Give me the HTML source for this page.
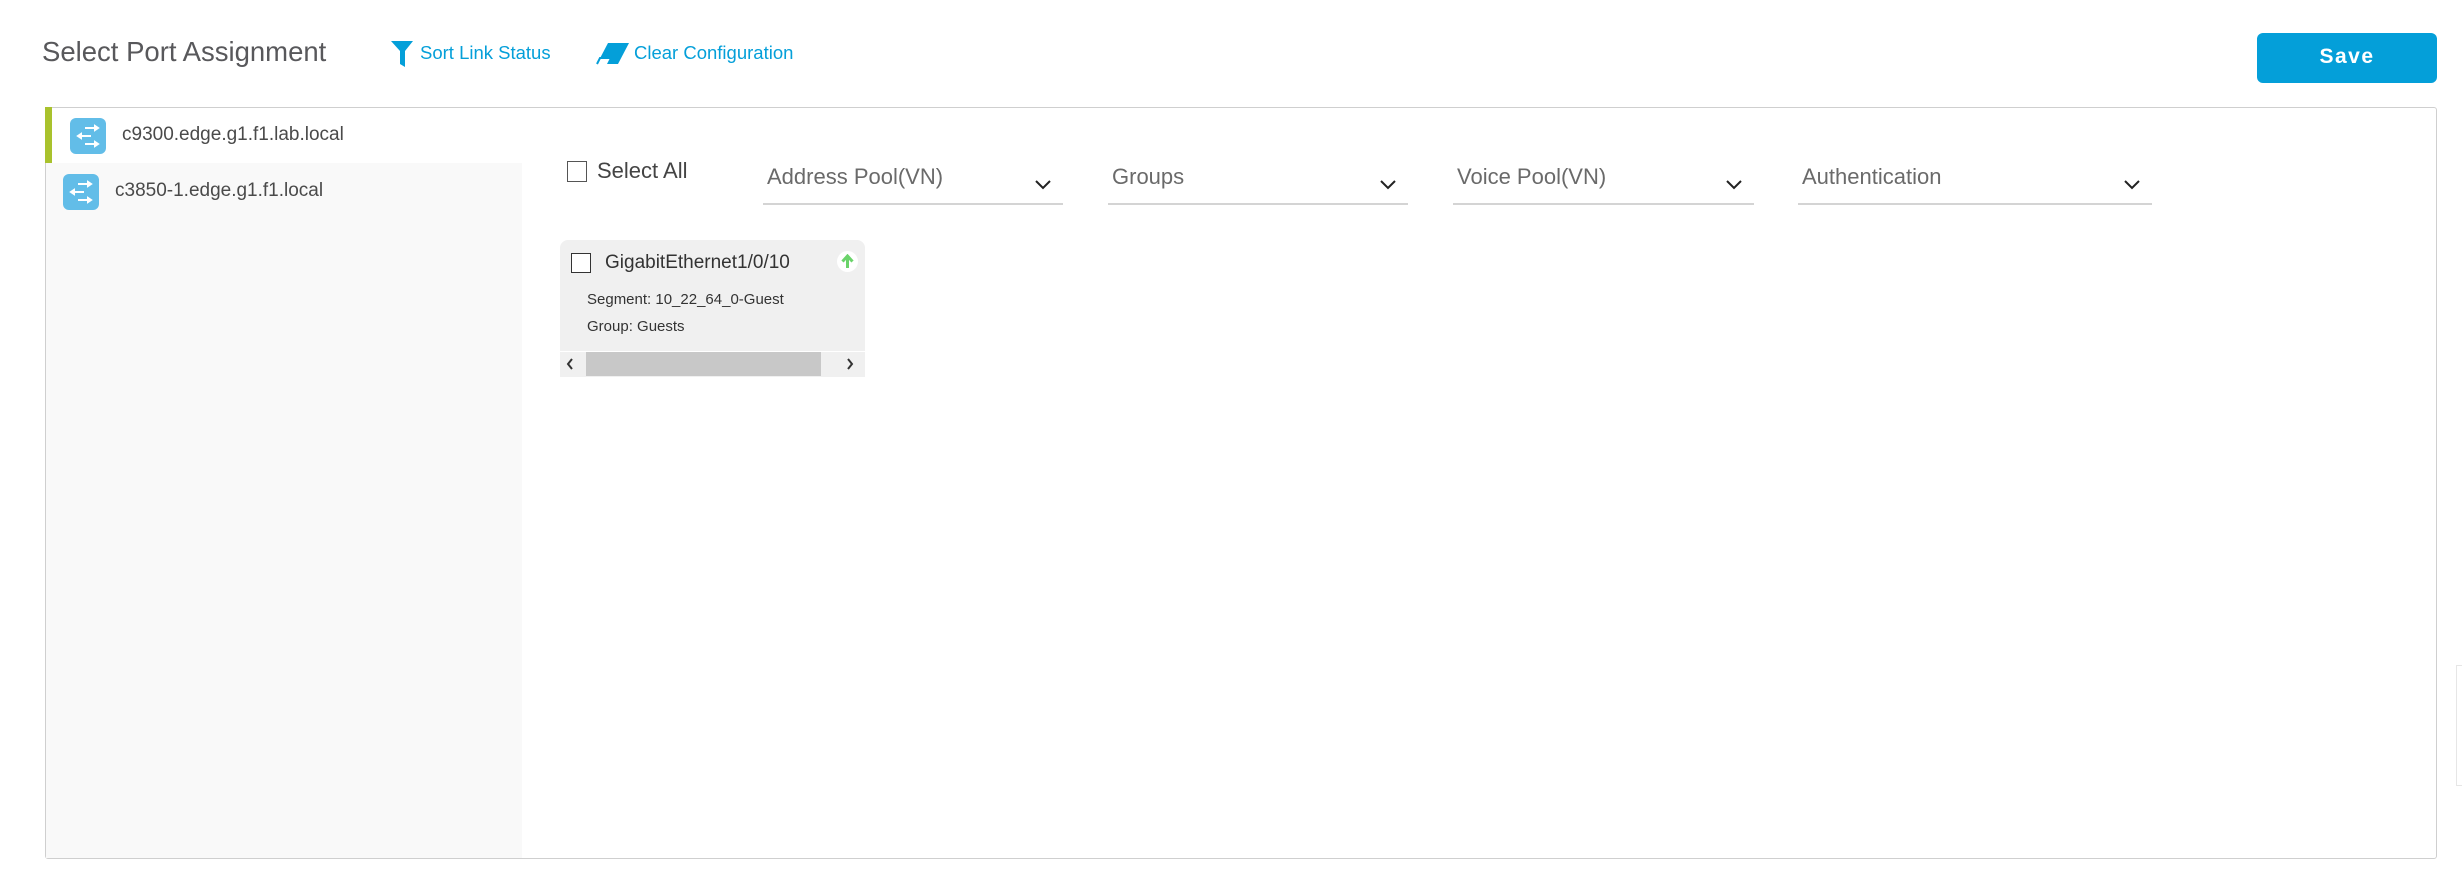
<!DOCTYPE html>
<html><head><meta charset="utf-8"><style>
*{margin:0;padding:0;box-sizing:border-box}
body{width:2462px;height:879px;background:#fff;font-family:"Liberation Sans",Arial,sans-serif;color:#58585b;position:relative;overflow:hidden}
.a{position:absolute;white-space:nowrap}
.link{color:#049fd9;font-size:18.5px}
.dd{position:absolute;top:160px;height:45px;border-bottom:2px solid #d4d4d4}
.dd span{position:absolute;left:4px;top:4px;font-size:22px;color:#6a6a6a}
.dd svg{position:absolute;right:12px;top:20px}
.ic{position:absolute;width:36px;height:36px;border-radius:6px;background:#62bde8}
</style></head><body>
<div class="a" style="left:42px;top:36px;font-size:27.5px;color:#58585b">Select Port Assignment</div>
<svg class="a" style="left:390px;top:40px" width="24" height="28" viewBox="0 0 24 28"><path d="M1 1H23L15 11V27L10 24V11Z" fill="#049fd9"/></svg>
<div class="a link" style="left:420px;top:42px">Sort Link Status</div>
<svg class="a" style="left:596px;top:42px" width="34" height="24" viewBox="0 0 34 24"><path d="M12 1H33L22 22H1Z" fill="#049fd9"/><path d="M4 16H14L11 22H1Z" fill="#fff"/><path d="M1 22L4 16H14" stroke="#049fd9" stroke-width="2" fill="none"/></svg>
<div class="a link" style="left:634px;top:42px">Clear Configuration</div>
<div class="a" style="left:2257px;top:33px;width:180px;height:50px;border-radius:6px;background:#049fd9;color:#fff;font-size:21px;font-weight:bold;text-align:center;line-height:48px;letter-spacing:1.5px">Save</div>

<div class="a" style="left:45px;top:107px;width:2392px;height:752px;border:1.5px solid #cfcfcf;border-radius:3px"></div>
<div class="a" style="left:46px;top:163px;width:476px;height:695px;background:#f9f9f9"></div>
<div class="a" style="left:45px;top:107px;width:7px;height:56px;background:#a9c22d"></div>

<div class="ic" style="left:70px;top:118px"></div>
<svg class="a" style="left:70px;top:118px" width="36" height="36" viewBox="0 0 36 36" stroke="#fff" stroke-width="2" fill="#fff"><path d="M15 10H25M11 18H21M15 26H25"/><path d="M25 8L28 10L25 12ZM11 16L8 18L11 20ZM25 24L28 26L25 28Z"/></svg>
<div class="a" style="left:122px;top:124px;font-size:19px;color:#4a4a4a">c9300.edge.g1.f1.lab.local</div>
<div class="ic" style="left:63px;top:174px"></div>
<svg class="a" style="left:63px;top:174px" width="36" height="36" viewBox="0 0 36 36" stroke="#fff" stroke-width="2" fill="#fff"><path d="M15 10H25M11 18H21M15 26H25"/><path d="M25 8L28 10L25 12ZM11 16L8 18L11 20ZM25 24L28 26L25 28Z"/></svg>
<div class="a" style="left:115px;top:180px;font-size:19px;color:#4a4a4a">c3850-1.edge.g1.f1.local</div>

<div class="a" style="left:567px;top:161px;width:20px;height:21px;border:1.5px solid #555"></div>
<div class="a" style="left:597px;top:158px;font-size:22px;color:#444">Select All</div>

<div class="dd" style="left:763px;width:300px"><span>Address Pool(VN)</span><svg width="16" height="10" viewBox="0 0 16 10"><path d="M1 1L8 8L15 1" stroke="#222" stroke-width="2" fill="none"/></svg></div>
<div class="dd" style="left:1108px;width:300px"><span>Groups</span><svg width="16" height="10" viewBox="0 0 16 10"><path d="M1 1L8 8L15 1" stroke="#222" stroke-width="2" fill="none"/></svg></div>
<div class="dd" style="left:1453px;width:301px"><span>Voice Pool(VN)</span><svg width="16" height="10" viewBox="0 0 16 10"><path d="M1 1L8 8L15 1" stroke="#222" stroke-width="2" fill="none"/></svg></div>
<div class="dd" style="left:1798px;width:354px"><span>Authentication</span><svg width="16" height="10" viewBox="0 0 16 10"><path d="M1 1L8 8L15 1" stroke="#222" stroke-width="2" fill="none"/></svg></div>

<div class="a" style="left:560px;top:240px;width:305px;height:137px;background:#f0f0f0;border-radius:8px 8px 0 0;overflow:hidden">
<div class="a" style="left:11px;top:13px;width:20px;height:20px;border:1.5px solid #333;background:#fff"></div>
<div class="a" style="left:45px;top:12px;font-size:19px;color:#333">GigabitEthernet1/0/10</div>
<div class="a" style="left:277px;top:11px;width:21px;height:21px;border-radius:50%;background:#fff"></div>
<svg class="a" style="left:280px;top:14px" width="15" height="15" viewBox="0 0 15 15"><path d="M7.5 14V3M2.5 7.5L7.5 2L12.5 7.5" stroke="#6ad36a" stroke-width="3" fill="none"/></svg>
<div class="a" style="left:27px;top:51px;font-size:15px;color:#333">Segment: 10_22_64_0-Guest</div>
<div class="a" style="left:27px;top:78px;font-size:15px;color:#333">Group: Guests</div>
<div class="a" style="left:0;top:111px;width:305px;height:26px;background:#f0f0f0;border-top:1px solid #fff"></div>
<div class="a" style="left:26px;top:112px;width:235px;height:24px;background:#c8c8c8"></div>
<svg class="a" style="left:6px;top:118px" width="8" height="12" viewBox="0 0 8 12"><path d="M6 1L2 6L6 11" stroke="#333" stroke-width="2" fill="none"/></svg>
<svg class="a" style="left:286px;top:118px" width="8" height="12" viewBox="0 0 8 12"><path d="M2 1L6 6L2 11" stroke="#333" stroke-width="2" fill="none"/></svg>
</div>
<div class="a" style="left:2456px;top:665px;width:10px;height:121px;border:1px solid #e6e6e6;background:#fff"></div>
</body></html>
